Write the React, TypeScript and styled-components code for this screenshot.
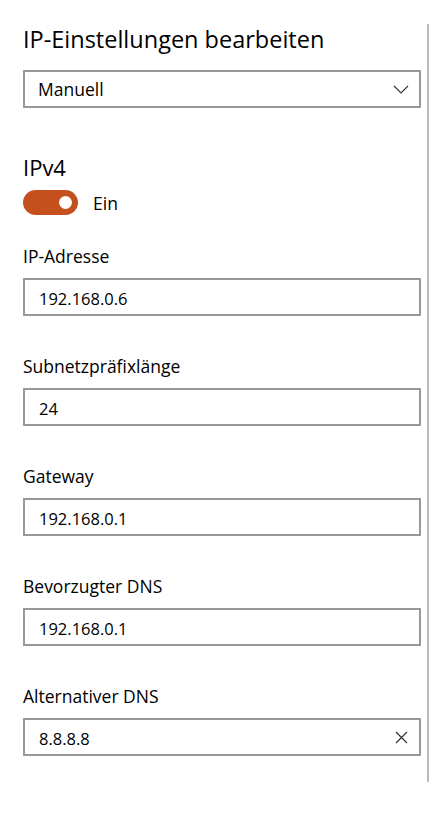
import React, { useState } from 'react';
import styled, { createGlobalStyle } from 'styled-components';

const GlobalStyle = createGlobalStyle`
    html, body {
        margin: 0;
        padding: 0;
        background: #ffffff;
    }
    body {
        font-family: "Open Sans", "Noto Sans", "Liberation Sans", sans-serif;
        color: #000000;
    }
`;

const Page = styled.div`
    position: relative;
    width: 429px;
    height: 813px;
    box-sizing: border-box;
    padding: 23px 8px 0 23px;
    display: flex;
    flex-direction: column;
    overflow: hidden;
`;

const ScrollIndicator = styled.div`
    position: absolute;
    top: 24px;
    right: 0;
    width: 2px;
    height: 758px;
    background: #b9b9b9;
`;

const Title = styled.h1`
    margin: 0;
    font-size: 23.5px;
    font-weight: 400;
    line-height: 32px;
`;

const Select = styled.div`
    margin-top: 15px;
    height: 38px;
    box-sizing: border-box;
    border: 2px solid #999999;
    display: flex;
    align-items: center;
    justify-content: space-between;
    padding: 0 10px 0 13px;
    font-size: 17.5px;
`;

const SectionTitle = styled.h2`
    margin: 45px 0 0 0;
    font-size: 22px;
    font-weight: 400;
    line-height: 28px;
`;

const ToggleRow = styled.div`
    margin-top: 9px;
    display: flex;
    align-items: center;
    gap: 15px;
    font-size: 17.5px;
`;

const Track = styled.button<{ $on: boolean }>`
    width: 55px;
    height: 25px;
    border: none;
    border-radius: 13px;
    padding: 0 6px;
    display: flex;
    align-items: center;
    justify-content: ${({ $on }) => ($on ? 'flex-end' : 'flex-start')};
    background: ${({ $on }) => ($on ? '#c4501e' : '#ffffff')};
    box-shadow: ${({ $on }) => ($on ? 'none' : 'inset 0 0 0 2px #333')};
    cursor: pointer;
`;

const Knob = styled.span<{ $on: boolean }>`
    width: 13px;
    height: 13px;
    border-radius: 50%;
    background: ${({ $on }) => ($on ? '#ffffff' : '#333333')};
`;

const Field = styled.div<{ $first?: boolean }>`
    margin-top: ${({ $first }) => ($first ? '29px' : '38px')};
    display: flex;
    flex-direction: column;
`;

const Label = styled.label`
    font-size: 17.5px;
    line-height: 24px;
`;

const InputBox = styled.div`
    margin-top: 10px;
    height: 38px;
    box-sizing: border-box;
    border: 2px solid #999999;
    display: flex;
    align-items: center;
    padding: 0 10px 0 14px;
`;

const Input = styled.input`
    flex: 1;
    border: none;
    outline: none;
    padding: 2px 0 0 0;
    font-family: inherit;
    font-size: 16.5px;
    color: #000000;
    background: transparent;
`;

const ClearButton = styled.button`
    border: none;
    background: transparent;
    padding: 0;
    width: 16px;
    height: 16px;
    display: flex;
    align-items: center;
    justify-content: center;
    cursor: pointer;
`;

const Chevron = () => (
    <svg width="16" height="9" viewBox="0 0 16 9">
        <path d="M1 1 L8 8 L15 1" fill="none" stroke="#333" strokeWidth="1.1" />
    </svg>
);

const Cross = () => (
    <svg width="13" height="13" viewBox="0 0 13 13">
        <path d="M1 1 L12 12 M12 1 L1 12" fill="none" stroke="#333" strokeWidth="1.2" />
    </svg>
);

const fields = [
    { label: 'IP-Adresse', value: '192.168.0.6' },
    { label: 'Subnetzpräfixlänge', value: '24' },
    { label: 'Gateway', value: '192.168.0.1' },
    { label: 'Bevorzugter DNS', value: '192.168.0.1' },
    { label: 'Alternativer DNS', value: '8.8.8.8', clearable: true },
];

const App: React.FC = () => {
    const [ipv4On, setIpv4On] = useState(true);
    const [values, setValues] = useState(fields.map((f) => f.value));

    const setValue = (i: number, v: string) => {
        setValues((prev) => prev.map((old, idx) => (idx === i ? v : old)));
    };

    return (
        <>
            <GlobalStyle />
            <Page>
                <Title>IP-Einstellungen bearbeiten</Title>
                <Select>
                    <span>Manuell</span>
                    <Chevron />
                </Select>

                <SectionTitle>IPv4</SectionTitle>
                <ToggleRow>
                    <Track $on={ipv4On} onClick={() => setIpv4On(!ipv4On)}>
                        <Knob $on={ipv4On} />
                    </Track>
                    <span>{ipv4On ? 'Ein' : 'Aus'}</span>
                </ToggleRow>

                {fields.map((f, i) => (
                    <Field key={f.label} $first={i === 0}>
                        <Label>{f.label}</Label>
                        <InputBox>
                            <Input value={values[i]} onChange={(e) => setValue(i, e.target.value)} />
                            {f.clearable && (
                                <ClearButton onClick={() => setValue(i, '')}>
                                    <Cross />
                                </ClearButton>
                            )}
                        </InputBox>
                    </Field>
                ))}
                <ScrollIndicator />
            </Page>
        </>
    );
};

export default App;
